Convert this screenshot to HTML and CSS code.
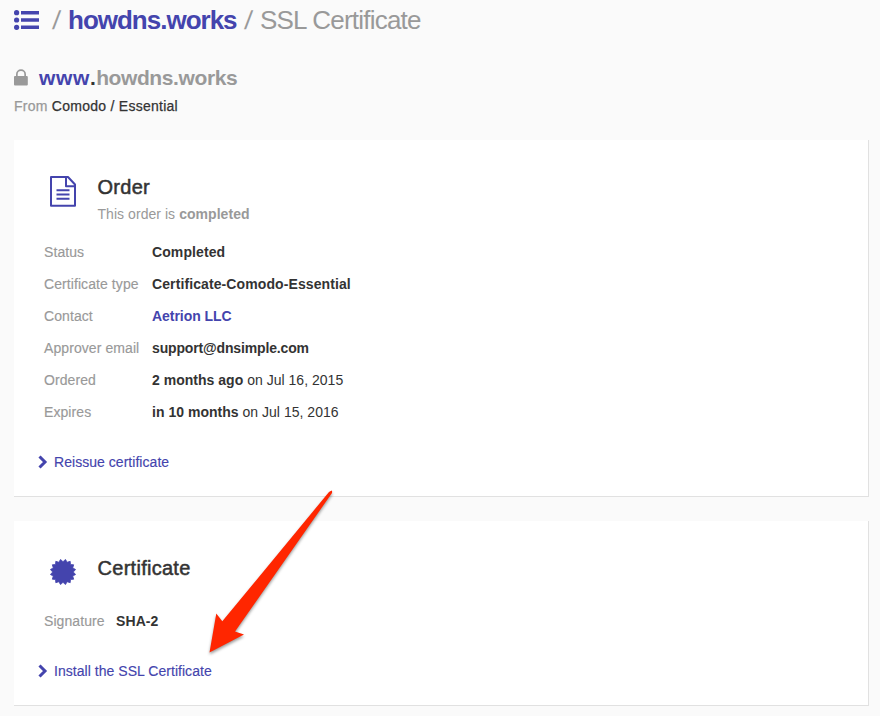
FILE: index.html
```html
<!DOCTYPE html>
<html lang="en">
<head>
<meta charset="utf-8">
<title>SSL Certificate</title>
<link rel="stylesheet" href="styles.css">
</head>
<body>
<nav class="crumbs">
  <svg class="list-icon" width="26" height="20" viewBox="0 0 26 20"><circle cx="2.600" cy="2.700" r="2.600"/><circle cx="2.600" cy="10" r="2.600"/><circle cx="2.600" cy="17.300" r="2.600"/><path d="M7 1h18v3.500H7zM7 8.300h18v3.500H7zM7 15.600h18v3.500H7z"/></svg>
  <span class="slash first">/</span>
  <a class="domain">howdns.works</a>
  <span class="slash">/</span>
  <span class="current">SSL Certificate</span>
</nav>
<header class="host">
  <svg class="lock" width="14" height="17" viewBox="0 0 14 17"><path fill-rule="evenodd" d="M2 7V5.200a5 5 0 0 1 10 0V7h.8q1 0 1 1v7.600q0 1-1 1H1q-1 0-1-1V8q0-1 1-1zM3.700 7h6.600V5.200a3.300 3.300 0 0 0-6.600 0z"/></svg>
  <h1><span class="sub">www</span><span class="dot">.</span>howdns.works</h1>
</header>
<p class="from">From <span>Comodo / Essential</span></p>

<section class="card order">
  <div class="heading">
    <svg class="doc" width="26" height="31" viewBox="0 0 26 31"><path d="M1 1h17l7 7.500V29.700H1zM16 1v9.300h9M6.500 14.200h13M6.500 18.400h13M6.500 22.700h13"/></svg>
    <div><h2>Order</h2><p class="note">This order is <b>completed</b></p></div>
  </div>
  <dl class="facts">
    <dt>Status</dt><dd><b>Completed</b></dd>
    <dt>Certificate type</dt><dd><b>Certificate-Comodo-Essential</b></dd>
    <dt>Contact</dt><dd><a><b>Aetrion LLC</b></a></dd>
    <dt>Approver email</dt><dd><b class="email">support@dnsimple.com</b></dd>
    <dt>Ordered</dt><dd class="date"><b>2 months ago</b> on Jul 16, 2015</dd>
    <dt>Expires</dt><dd class="date"><b>in 10 months</b> on Jul 15, 2016</dd>
  </dl>
  <a class="action"><svg width="10" height="14" viewBox="0 0 10 14"><path d="M1.500 1.500L7 7l-5.500 5.500"/></svg>Reissue certificate</a>
</section>

<section class="card cert">
  <div class="heading">
    <svg class="seal" width="26" height="26" viewBox="-13 -13 26 26"><path d="M0 -10.300L2.500 -12.600L4.100 -9.700L7.200 -10.700L7.500 -7.500L10.700 -7.200L9.700 -4.100L12.600 -2.500L10.300 0L12.600 2.500L9.700 4.100L10.700 7.200L7.500 7.500L7.200 10.700L4.100 9.700L2.500 12.600L0 10.300L-2.500 12.600L-4.100 9.700L-7.200 10.700L-7.500 7.500L-10.700 7.200L-9.700 4.100L-12.600 2.500L-10.300 0L-12.600 -2.500L-9.700 -4.100L-10.700 -7.200L-7.500 -7.500L-7.200 -10.700L-4.100 -9.700L-2.500 -12.600z"/></svg>
    <h2>Certificate</h2>
  </div>
  <dl class="facts short"><dt>Signature</dt><dd><b>SHA-2</b></dd></dl>
  <a class="action"><svg width="10" height="14" viewBox="0 0 10 14"><path d="M1.500 1.500L7 7l-5.500 5.500"/></svg>Install the SSL Certificate</a>
</section>
<svg class="arrow" width="140" height="176" viewBox="200 484 140 176"><path d="M331.500 490.500Q332.500 491 332 493L235 631.500L244 634.500L209.500 652.500L216.300 613.500L222.300 621.300L329 492Z"/></svg>
</body>
</html>
```

FILE: styles.css
```css
* { box-sizing: border-box; }
body {
  margin: 0;
  padding: 0 11px 0 14px;
  height: 716px;
  overflow: hidden;
  background: #fafafa;
  color: #333;
  font: 14px/20px "Liberation Sans", Arial, sans-serif;
}
h1, h2, p, dl, dd { margin: 0; }
a { color: #4444ad; }
.crumbs { display: flex; height: 40px; line-height: 40px; font-size: 26px; white-space: nowrap; }
.list-icon { margin: 10px 13px 0 0; fill: #4444ad; }
.slash { width: 15px; color: #999; transform: skewX(-6deg); }
.domain { width: 177px; font-weight: bold; letter-spacing: -1px; }
.current { color: #999; letter-spacing: -.78px; }
.host { display: flex; height: 32px; margin-top: 22px; }
.lock { margin: 7px 11px 0 0; fill: #999; }
h1 { font-size: 21px; line-height: 32px; color: #999; letter-spacing: -.4px; }
.sub { color: #4444ad; letter-spacing: .7px; }
.dot { color: #333; letter-spacing: .2px; }
.from { height: 24px; line-height: 24px; color: #999; letter-spacing: .26px; -webkit-text-stroke: .25px; }
.from span { color: #333; }
.card { background: #fff; border: solid #e1e1e1; border-width: 0 1px 1px 0; padding-left: 24px; }
.order { height: 357px; margin-top: 22px; padding-top: 36px; }
.cert { height: 185px; margin-top: 24px; padding-top: 36px; }
.heading { display: flex; padding-left: 12px; }
.heading svg { flex: none; margin-right: 21.500px; }
.order .heading { height: 60px; }
.cert .heading { height: 48px; }
.doc { fill: none; stroke: #4444ad; stroke-width: 2; stroke-linejoin: round; }
.seal { margin-top: 2px; fill: #4444ad; stroke: #4444ad; stroke-width: .8; stroke-linejoin: round; }
h2 { font-size: 20px; font-weight: normal; line-height: 23px; letter-spacing: .28px; -webkit-text-stroke: .5px; }
.note { margin-top: 5px; color: #999; letter-spacing: .05px; }
.facts { display: grid; grid-template-columns: 108px auto; grid-auto-rows: 32px; line-height: 32px; padding-left: 6px; justify-content: start; }
.short { grid-template-columns: 72px auto; }
dt { color: #999; letter-spacing: .08px; -webkit-text-stroke: .15px; }
dd { letter-spacing: .1px; }
.date { letter-spacing: .02px; }
.email { letter-spacing: -.15px; }
dd a { letter-spacing: -.05px; }
.action { display: flex; align-items: center; height: 20px; margin-top: 24px; letter-spacing: .04px; -webkit-text-stroke: .15px; }
.action svg { margin-right: 6px; fill: none; stroke: #4444ad; stroke-width: 3; }
.arrow { position: absolute; left: 200px; top: 484px; fill: #ff2600; filter: drop-shadow(0 2px 1.500px rgba(0,0,0,.4)); }
```
